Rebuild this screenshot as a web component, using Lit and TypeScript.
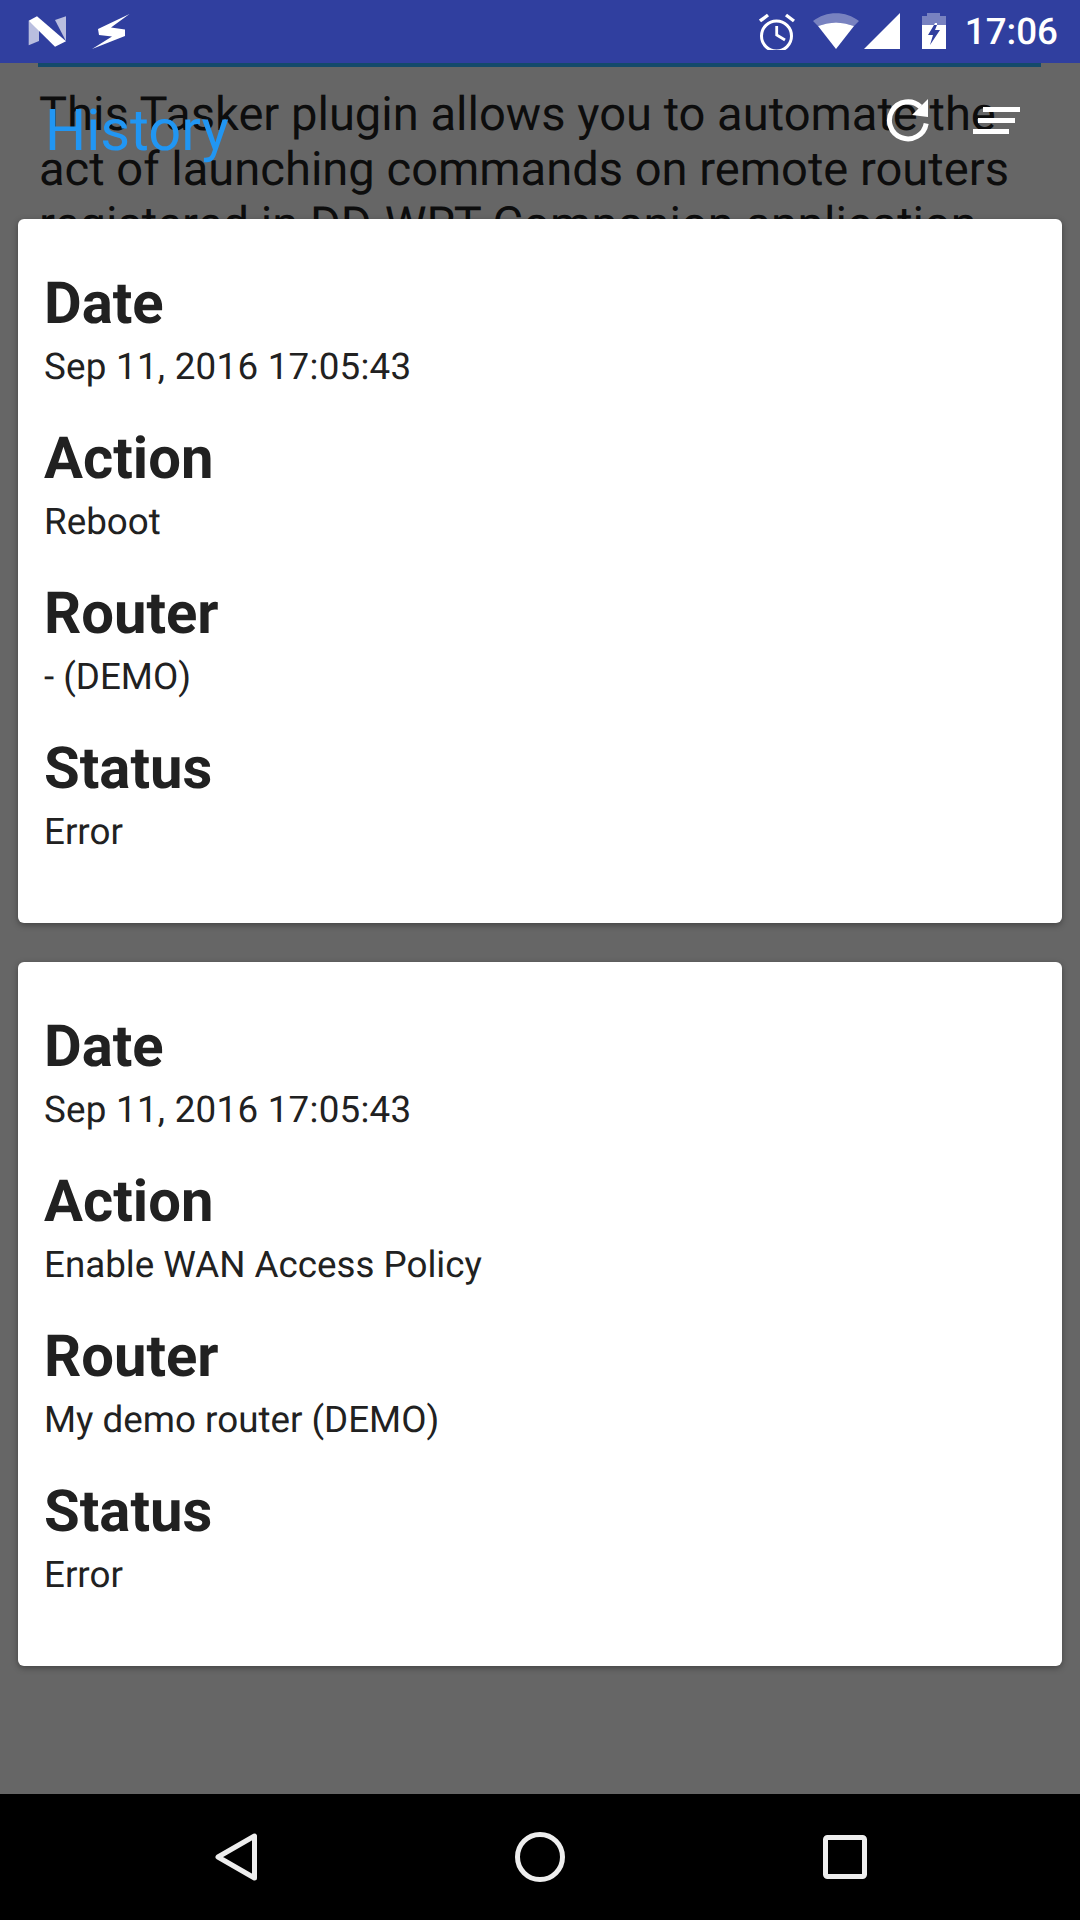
import { LitElement, html, css, svg } from 'lit';
import { customElement } from 'lit/decorators.js';

const cards = [
  { date: 'Sep 11, 2016 17:05:43', action: 'Reboot', router: '- (DEMO)', status: 'Error' },
  { date: 'Sep 11, 2016 17:05:43', action: 'Enable WAN Access Policy', router: 'My demo router (DEMO)', status: 'Error' },
];

const nIcon = svg`<svg class="ic" width="38" height="31" viewBox="0 0 38 31">
  <path d="M.7 4.700 V29.300 L11 25 V12Z" fill="#b9bedf"/>
  <path d="M27 4 L38 .3 V25.300Z" fill="#b9bedf"/>
  <path d="M.7 4.700 L9 .3 L38 25.300 L27 30.700Z" fill="#fff"/>
</svg>`;

const boltIcon = svg`<svg class="ic bolt" width="38" height="35" viewBox="0 0 38 35">
  <path d="M37.500 0 L6 15 L7 21 L20 22.500 L0 35 L33 22 L33 15.500 L19 13.500Z" fill="#fff"/>
</svg>`;

const alarmIcon = svg`<svg class="ic" width="36" height="37" viewBox="0 0 36 37" fill="none" stroke="#fff">
  <circle cx="17.500" cy="23" r="15" stroke-width="3"/>
  <path d="M17.700 13 V22 L26 27" stroke-width="2.800"/>
  <path d="M1 8 L9 2 M35 8 L27 2" stroke-width="3.400"/>
</svg>`;

const wifiIcon = svg`<svg class="ic" width="46" height="37" viewBox="0 0 46 37">
  <path d="M0 8 C13 -2.500 33 -2.500 46 8 L41 13 Q23 6 5 13Z" fill="#fff" fill-opacity=".35"/>
  <path d="M5 13 Q23 6 41 13 L23 36Z" fill="#fff"/>
</svg>`;

const signalIcon = svg`<svg class="ic" width="37" height="37" viewBox="0 0 37 37"><path d="M0 36 L36 0 V36Z" fill="#fff"/></svg>`;

const batteryIcon = svg`<svg class="ic" width="24" height="37" viewBox="0 0 24 37">
  <path d="M5 0 H18 V3 H24 V12 H0 V3 H5Z" fill="#fff" fill-opacity=".35"/>
  <path fill-rule="evenodd" d="M0 12 H24 V36 H0Z M12 12 L6 22 H11 L8 32 L18 17 H13 L15 12Z" fill="#fff"/>
  <path d="M13 10 L12 12 H15 V10Z" fill="#fff"/>
</svg>`;

const refreshIcon = svg`<svg class="ic" width="44" height="44" viewBox="0 0 44 44" fill="none">
  <path d="M34.500 7.800 A18.500 18.500 0 1 0 40.200 24.500" stroke="#fff" stroke-width="5"/>
  <path d="M26 16 L42 0 V18Z" fill="#fff"/>
</svg>`;

const menuIcon = svg`<svg class="ic" width="47" height="27" viewBox="0 0 47 27" fill="#fff">
  <rect x="10" y="0" width="37" height="5"/>
  <rect x="5" y="11" width="37" height="5"/>
  <rect x="0" y="22" width="36" height="5"/>
</svg>`;

const backIcon = svg`<svg class="ic" width="42" height="48" viewBox="0 0 42 48" fill="none">
  <path d="M39.500 3 V45 L3 24Z" stroke="#eee" stroke-width="5" stroke-linejoin="round"/>
</svg>`;

const homeIcon = svg`<svg class="ic" width="50" height="50" viewBox="0 0 50 50" fill="none">
  <circle cx="25" cy="25" r="22.500" stroke="#eee" stroke-width="5"/>
</svg>`;

const recentIcon = svg`<svg class="ic" width="44" height="44" viewBox="0 0 44 44" fill="none">
  <rect x="2.500" y="2.500" width="39" height="39" rx="2" stroke="#eee" stroke-width="5"/>
</svg>`;

@customElement('app-root')
export class AppRoot extends LitElement {
  static styles = css`
    :host {
      display: flex;
      flex-direction: column;
      width: 1080px;
      height: 1920px;
      font-family: Roboto, 'Noto Sans', sans-serif;
      text-rendering: geometricPrecision;
      color: #212121;
      overflow: hidden;
    }
    .ic {
      display: block;
      flex: none;
    }
    .status {
      flex: none;
      height: 63px;
      background: #303f9f;
      display: flex;
      align-items: center;
      padding: 0 22px 0 28px;
      color: #fff;
    }
    .status-left {
      display: flex;
      align-items: center;
      gap: 26px;
    }
    .bolt {
      filter: blur(0.7px);
    }
    .status-right {
      margin-left: auto;
      display: flex;
      align-items: center;
    }
    .wifi-slot {
      margin-left: 18px;
    }
    .signal-slot {
      margin-left: 5px;
    }
    .battery-slot {
      margin-left: 21px;
    }
    .time {
      font-size: 36.75px;
      font-weight: 500;
      line-height: 63px;
      margin-left: 19px;
    }
    .main {
      flex: 1;
      position: relative;
      overflow: hidden;
      background: #666;
    }
    .behind {
      position: absolute;
      top: 0;
      left: 38px;
      width: 1003px;
      box-sizing: border-box;
      border-top: 4px solid #134a6b;
      padding: 20px 0 0 1px;
      font-size: 47.1px;
      line-height: 55px;
      color: #0d0d0d;
      white-space: nowrap;
    }
    .title {
      position: absolute;
      left: 45px;
      top: 35px;
      font-size: 57.75px;
      line-height: 66px;
      color: #2196f3;
    }
    .refresh {
      position: absolute;
      left: 886px;
      top: 36px;
    }
    .menu {
      position: absolute;
      left: 973px;
      top: 44px;
    }
    .cards {
      position: relative;
      display: flex;
      flex-direction: column;
      gap: 39px;
      padding: 156px 18px 0;
    }
    .card {
      height: 704px;
      box-sizing: border-box;
      padding: 54px 26px 0;
      background: #fff;
      border-radius: 6px;
      box-shadow: 0 2px 6px rgba(0, 0, 0, 0.35);
    }
    .field {
      margin-bottom: 39px;
    }
    .label {
      font-size: 58px;
      font-weight: 700;
      line-height: 62px;
    }
    .value {
      margin-top: 10px;
      font-size: 36.75px;
      line-height: 44px;
    }
    .value.date {
      letter-spacing: 0.25px;
    }
    .nav {
      flex: none;
      height: 126px;
      background: #000;
      display: flex;
      align-items: center;
      gap: 258px;
      padding-left: 215px;
    }
  `;

  renderField(label: string, value: string, cls = '') {
    return html`<div class="field">
      <div class="label">${label}</div>
      <div class="value ${cls}">${value}</div>
    </div>`;
  }

  render() {
    return html`
      <div class="status">
        <div class="status-left">${nIcon}${boltIcon}</div>
        <div class="status-right">
          ${alarmIcon}
          <span class="wifi-slot">${wifiIcon}</span>
          <span class="signal-slot">${signalIcon}</span>
          <span class="battery-slot">${batteryIcon}</span>
          <span class="time">17:06</span>
        </div>
      </div>
      <div class="main">
        <div class="behind">
          This Tasker plugin allows you to automate the<br />
          act of launching commands on remote routers<br />
          registered in DD-WRT Companion application
        </div>
        <span class="title">History</span>
        <span class="refresh">${refreshIcon}</span>
        <span class="menu">${menuIcon}</span>
        <div class="cards">
          ${cards.map(
            (c) => html`<div class="card">
              ${this.renderField('Date', c.date, 'date')}
              ${this.renderField('Action', c.action)}
              ${this.renderField('Router', c.router)}
              ${this.renderField('Status', c.status)}
            </div>`
          )}
        </div>
      </div>
      <div class="nav">${backIcon}${homeIcon}${recentIcon}</div>
    `;
  }
}
